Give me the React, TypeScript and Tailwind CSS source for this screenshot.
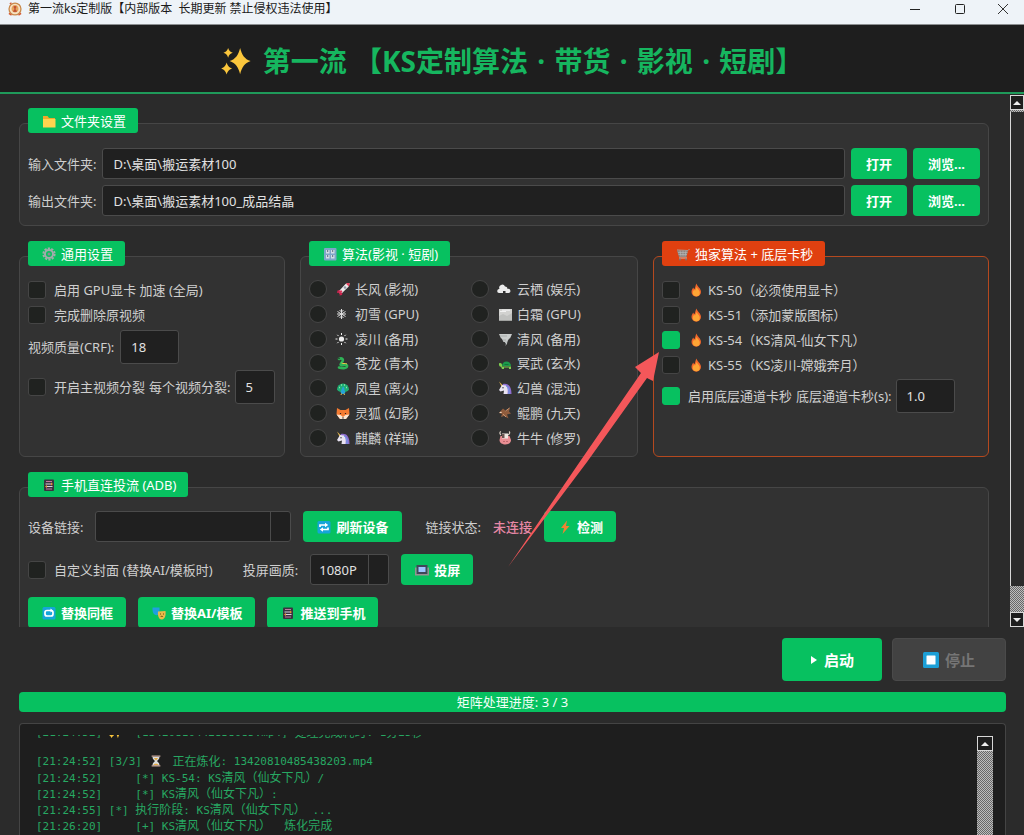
import { useState, type ReactNode } from "react"
import clsx from "clsx"

interface IconProps {
  className?: string
}

type IconName =
  | "folder" | "gear" | "knobs" | "cart" | "phone" | "rocket" | "snow" | "sun" | "snake" | "peacock"
  | "fox" | "unicorn" | "cloud" | "fog" | "tornado" | "turtle" | "eagle" | "ox" | "fire" | "refresh"
  | "repeat" | "masks" | "bolt" | "screen" | "stop" | "hourglass" | "sparkles"

// Small emoji drawings, all on a 16x16 grid
const drawings: Record<IconName, ReactNode> = {
  folder: (
    <>
      <path d="M2 3h4.5l1.5 2H14v9H2z" fill="#f0a92a" />
      <path d="M2 6h12.5v8.500H2z" fill="#ffd44f" />
    </>
  ),
  gear: (
    <>
      <circle cx="8" cy="8" r="5.600" fill="none" stroke="#a3abab" strokeWidth="2" strokeDasharray="2.200 1.300" />
      <circle cx="8" cy="8" r="4" fill="none" stroke="#a3abab" strokeWidth="2" />
      <circle cx="8" cy="8" r="1.500" fill="#8a9292" />
    </>
  ),
  knobs: (
    <>
      <rect x="2" y="2" width="12.500" height="12.500" rx="1" fill="#7fa6c9" />
      <path d="M4 4h3.500v3.500H4zM9 4h3.500v3.500H9zM4 9h3.500v3.500H4zM9 9h3.500v3.500H9z" fill="#d4dde6" />
      <path d="M5.700 4v2M10.700 4v2M5.700 9v2M10.700 9v2" stroke="#5b6c80" />
    </>
  ),
  cart: (
    <>
      <path d="M2 4l11 .5 1.500-1.500" fill="none" stroke="#b0a5a0" />
      <path d="M2 4.500h11L11.500 11H4z" fill="#8d8581" />
      <path d="M3 6.500h9.500M3.500 8.500H12M5 4.500l1 6M8 4.500v6M11 4.500l-1 6" stroke="#bbb" strokeWidth=".6" />
      <path d="M4 12h8" stroke="#c9beb9" />
      <circle cx="5" cy="13.500" r="1" fill="#777" />
      <circle cx="11" cy="13.500" r="1" fill="#777" />
    </>
  ),
  phone: (
    <>
      <rect x="3" y="2.500" width="10" height="11.500" rx="1" fill="#3b3340" />
      <path d="M5 4.500h6M5 12h6" stroke="#c07a9e" strokeWidth="1.200" />
      <path d="M4.500 7h5.500M6 9.500h5.500" stroke="#d8d2dc" strokeWidth="1.200" />
      <path d="M10 5.500l2 1.500-2 1.500zM6 8l-2 1.500L6 11z" fill="#e8953c" />
    </>
  ),
  rocket: (
    <>
      <path d="M5 9L2.500 9.500 2 12l3-.5zM7.500 11.500L7 14l-2.500.5.5-3z" fill="#c8234d" />
      <path d="M4.500 9.500L10.500 3C12 1.800 14 2 14.500 2c0 1 0 2.500-1.200 4L7 12z" fill="#ececec" />
      <path d="M11 2.700C12.500 1.900 14 2 14.500 2c0 1 0 2-.7 3.400z" fill="#e8415f" />
      <circle cx="10" cy="6.500" r="1.300" fill="#8f94a6" />
      <path d="M3.500 11.500L6 9l1.500 1.500L4.500 13z" fill="#d9345a" />
    </>
  ),
  snow: (
    <path d="M6.500 3v10M2.500 5.500l8 5M2.500 10.500l8-5M4.500 4l2 2 2-2M4.500 12l2-2 2 2M2 8h9" fill="none" stroke="#ddd" />
  ),
  sun: (
    <>
      <circle cx="6.500" cy="8" r="2.600" fill="#eee" />
      <path d="M6.500 2v2M6.500 12v2M.5 8h2M10.500 8h2M2.300 3.800l1.300 1.300M9.400 10.900l1.300 1.300M2.300 12.200l1.300-1.300M9.400 5.100l1.300-1.300" stroke="#eee" />
    </>
  ),
  snake: (
    <>
      <path d="M4 4c3-1.500 5 .5 3 3s-2 3.500.5 3 5-.5 4.500 1.500-5 2-8 1" fill="none" stroke="#2fb457" strokeWidth="2.600" strokeLinecap="round" />
      <path d="M6.500 8c1 1 4 0 5.500 1" fill="none" stroke="#f2cf4a" />
      <circle cx="4" cy="3.500" r=".7" fill="#222" />
    </>
  ),
  peacock: (
    <>
      <path d="M2 9.500A6 6 0 0 1 14 9.500c-1 2-3 2.500-6 2.500s-5-.5-6-2.500z" fill="#1fae74" />
      <path d="M4 7.500h1M6 5h1M9 5h1M11 7.500h1" stroke="#8be3a5" strokeWidth="1.500" />
      <path d="M8 6.500c2 1 1 3 2 5s-1 2.500-2 2.500-3-.5-2-3 1-3 2-4.500z" fill="#27a3d9" />
      <path d="M6.500 13.500L6 15M9 13.500l.5 1.500" stroke="#e7c04b" />
    </>
  ),
  fox: (
    <>
      <path d="M2 3l3.500 2h5L14 3l.5 6-3 4.500h-7L1.500 9z" fill="#f47b32" />
      <path d="M1.500 9.500l4 .5L8 12l2.500-2 4-.5-3.500 4.500H5z" fill="#fbe6d2" />
      <path d="M5.500 8v1M10.500 8v1" stroke="#2b211c" strokeWidth="1.200" />
      <path d="M7 12.500h2L8 14z" fill="#2b211c" />
    </>
  ),
  unicorn: (
    <>
      <path d="M2 1.500l4 4-1.500 1z" fill="#e6b84d" />
      <path d="M6 4c5-1 8.500 2 8.500 10H10L5.500 5z" fill="#8e6fd0" />
      <path d="M5 5l4 .5c2 2.500 2 5 1.500 8.500H6.500l.5-3.500-3.500 1L2 10z" fill="#e9e4f2" />
      <path d="M9 6c2.500 1 3.500 4 3 8" fill="none" stroke="#6aa7ec" />
      <circle cx="6" cy="7.800" r=".7" fill="#333" />
    </>
  ),
  cloud: <path d="M2 12a2 2 0 0 1 .5-4A3 3 0 0 1 8 5.500a2.500 2.500 0 0 1 2.500 2.500A2 2 0 0 1 12 12H8.500V10H6v2z" fill="#ececec" />,
  fog: (
    <>
      <rect x="2" y="3" width="13" height="11.500" fill="#d2d2d0" />
      <path d="M2 14.500V10l4-2 4 2 5-3v7.500z" fill="#c0c1bf" />
      <path d="M3 5.500h6M5 4.200h8" stroke="#f2f2f2" />
    </>
  ),
  tornado: (
    <>
      <path d="M2 3h13l-2 4.500H4zM4.500 7h8L10 11H6.500z" fill="#c9cccb" />
      <path d="M7 10h3.500l-.5 3L8 15l1-2z" fill="#c0c4c3" />
      <path d="M3 5h7M6 9h3" stroke="#9a9e9d" strokeWidth=".7" />
    </>
  ),
  turtle: (
    <>
      <path d="M5 11a4.500 4.500 0 0 1 9 0z" fill="#1c9a4b" />
      <path d="M4 11.500h10v2.500h-2V12.500H7V14H5z" fill="#7dcf4f" />
      <path d="M2 8.500c1.500-1 3 0 3 1.500v2c-2 0-3.500-1-3-3.500z" fill="#7dcf4f" />
      <path d="M7.500 9.500h4" stroke="#0f7637" />
    </>
  ),
  eagle: (
    <>
      <path d="M2 8l4-4.500 3 2.500 4-3.500-1 4 2 2-4 1 1.500 4L7 11l-3 1 1-3z" fill="#8f5c3d" />
      <path d="M8.500 6l4-3M6 9l3 3" stroke="#c4906d" />
      <path d="M2 8l2-1.500 1 1.500z" fill="#f0d9c2" />
    </>
  ),
  ox: (
    <>
      <path d="M4 5C2.500 4 2.500 2 4 1.500M11 5c2-1 2-3 1-3.500" fill="none" stroke="#dcd2c6" strokeWidth="1.200" />
      <path d="M3.500 6h9l1.500 4c0 3-2.500 4.500-5.500 4.500S2.500 13 2.500 10z" fill="#e98e93" />
      <path d="M5 3.500h6v5H5z" fill="#efe8e2" />
      <path d="M5 4h2.500v4H5z" fill="#6b5550" />
      <path d="M6.500 11.500h1M9.500 11.500h1" stroke="#913f47" />
    </>
  ),
  fire: (
    <>
      <path d="M8.500 1.500c.5 3 4.500 4.500 4.500 8.500a4.700 4.700 0 0 1-9.500 0c0-2 1-3.500 2-4.500 0 1 .5 1.500 1 1.500C7.500 5 7.500 3 8.500 1.500z" fill="#f1672b" />
      <path d="M8.500 5c.5 1.500 3.300 3 3.300 5.800a3.500 3.500 0 0 1-7 0c0-1.500.7-2.300 1.400-3.300.2.700.5 1 .9 1 .6-.8.800-2.200 1.400-3.500z" fill="#fda535" />
    </>
  ),
  refresh: (
    <>
      <rect x="1.500" y="2" width="13" height="12.500" rx="1.500" fill="#15a5d8" />
      <path d="M4 8V6h6M12 8.500v2H6" fill="none" stroke="#fff" strokeWidth="1.700" />
      <path d="M9 3.800L12.200 6 9 8.200zM7 8.300l-3.200 2.200L7 12.700z" fill="#fff" />
    </>
  ),
  repeat: (
    <>
      <rect x="1.500" y="2" width="13" height="12.500" rx="1.500" fill="#15a5d8" />
      <rect x="4" y="5.500" width="8" height="5.500" rx="2" fill="none" stroke="#fff" strokeWidth="1.700" />
      <path d="M9.500 3.500l2.500 2-2.500 2z" fill="#fff" />
    </>
  ),
  masks: (
    <>
      <path d="M1.500 2.500h7v5c0 2.500-3 3.500-5 2s-2-4-2-7z" fill="#1f9fe0" />
      <path d="M7 6.500l7.500-.5c.5 4.500-.5 8-3.500 8.500S6.500 11 7 6.500z" fill="#e9b949" />
      <path d="M9 9h1M12 9h1M9.500 12c.5-1 2-1 2.500 0" fill="none" stroke="#6d4e12" />
    </>
  ),
  bolt: <path d="M10 1.500L4 9h3l-1.500 6L12.500 7H9z" fill="#f08232" />,
  screen: (
    <>
      <rect x="2.500" y="3" width="11" height="9" fill="#3f4658" />
      <rect x="4.500" y="5" width="7" height="5" fill="#9cc6ff" />
      <path d="M1 5.500h1.500V12h11V5.500H15V13.500H1z" fill="#9a8f93" />
    </>
  ),
  stop: (
    <>
      <rect x="0" y="0" width="16" height="16" rx="1.500" fill="#1c9fd6" />
      <rect x="3.500" y="3.500" width="9" height="9" rx=".5" fill="#fff" />
    </>
  ),
  hourglass: (
    <>
      <path d="M4 3h8c0 3-2 4-3 5 1 1 3 2 3 5H4c0-3 2-4 3-5-1-1-3-2-3-5z" fill="#d9dcdc" />
      <path d="M5.500 4.500h5L8 7.500zM5 12.500c1-2 5-2 6 0z" fill="#e3a93f" />
      <path d="M3 2.500h10M3 13.500h10" stroke="#c9a89a" strokeWidth="1.300" />
    </>
  ),
  sparkles: (
    <path
      d="M10.200 1C11.200 4.800 12.500 6.800 15.800 8c-3.300 1.200-4.600 3.200-5.600 7C9.200 11.200 7.900 9.200 4.600 8c3.300-1.200 4.600-3.200 5.600-7zM3.800 1c.5 1.500 1 2 2.500 2.600-1.500.6-2 1.100-2.500 2.600-.5-1.500-1-2-2.500-2.600 1.500-.6 2-1.100 2.500-2.600zM3 8.800c.6 1.900 1.200 2.500 2.900 3.200-1.700.7-2.300 1.300-2.900 3.200-.6-1.900-1.200-2.500-2.900-3.200 1.700-.7 2.300-1.300 2.900-3.200z"
      fill="#fbc63c"
    />
  ),
}

const Icon = ({ name, className = "size-4" }: IconProps & { name: IconName }) => (
  <svg viewBox="0 0 16 16" className={clsx("shrink-0", className)} aria-hidden="true">
    {drawings[name]}
  </svg>
)

const fieldClass = "min-w-0 rounded-[3px] border border-[#4b4b4b] bg-[#202020] px-2.5 text-[#e2e2e2] outline-none"
const boxClass = "size-[18px] shrink-0 appearance-none border border-[#454545] bg-[#202220] checked:border-[#07c160] checked:bg-[#07c160]"

interface GroupProps {
  icon: IconName
  title: string
  accent?: boolean
  className?: string
  children: ReactNode
}

const Group = ({ icon, title, accent, className, children }: GroupProps) => (
  <section className={clsx("rounded-md border bg-[#323232] px-2", accent ? "border-[#b5491f]" : "border-[#464646]", className)}>
    <h2
      className={clsx(
        "-mt-4 flex h-[25px] w-fit items-center gap-1 rounded-[3px] pr-3 pl-[13px] text-white",
        accent ? "bg-[#e04010]" : "bg-[#07c160]"
      )}
    >
      <Icon name={icon} />
      {title}
    </h2>
    {children}
  </section>
)

interface ButtonProps {
  icon?: IconName
  children: ReactNode
}

const Button = ({ icon, children }: ButtonProps) => (
  <button
    type="button"
    className={clsx(
      "flex h-[31px] shrink-0 items-center gap-1 rounded bg-[#07c160] font-bold text-white",
      icon ? "px-[13px]" : "px-[15px]"
    )}
  >
    {icon && <Icon name={icon} />}
    {children}
  </button>
)

interface CheckProps {
  label: string
  icon?: IconName
  checked?: boolean
}

const Check = ({ label, icon, checked }: CheckProps) => (
  <label className="flex h-[25px] items-center gap-2 whitespace-nowrap">
    <input type="checkbox" defaultChecked={checked} className={clsx(boxClass, "rounded-[3px]")} />
    <span className="flex items-center gap-1">
      {icon && <Icon name={icon} />}
      {label}
    </span>
  </label>
)

const folders = [
  { id: "input-dir", label: "输入文件夹:", path: "D:\\桌面\\搬运素材100" },
  { id: "output-dir", label: "输出文件夹:", path: "D:\\桌面\\搬运素材100_成品结晶" },
]

const algorithms: { icon: IconName; label: string }[] = [
  { icon: "rocket", label: "长风 (影视)" },
  { icon: "cloud", label: "云栖 (娱乐)" },
  { icon: "snow", label: "初雪 (GPU)" },
  { icon: "fog", label: "白霜 (GPU)" },
  { icon: "sun", label: "凌川 (备用)" },
  { icon: "tornado", label: "清风 (备用)" },
  { icon: "snake", label: "苍龙 (青木)" },
  { icon: "turtle", label: "冥武 (玄水)" },
  { icon: "peacock", label: "凤皇 (离火)" },
  { icon: "unicorn", label: "幻兽 (混沌)" },
  { icon: "fox", label: "灵狐 (幻影)" },
  { icon: "eagle", label: "鲲鹏 (九天)" },
  { icon: "unicorn", label: "麒麟 (祥瑞)" },
  { icon: "ox", label: "牛牛 (修罗)" },
]

const exclusive = [
  { label: "KS-50（必须使用显卡）", checked: false },
  { label: "KS-51（添加蒙版图标）", checked: false },
  { label: "KS-54（KS清风-仙女下凡）", checked: true },
  { label: "KS-55（KS凌川-嫦娥奔月）", checked: false },
]

const logLines = [
  "[21:24:52]     [*] KS-54: KS清风（仙女下凡）/",
  "[21:24:52]     [*] KS清风（仙女下凡）:",
  "[21:24:55] [*] 执行阶段: KS清风（仙女下凡） ...",
  "[21:26:20]     [+] KS清风（仙女下凡）  炼化完成",
]

// Chinese runs are set one size up from the monospace text
const LogText = ({ text }: { text: string }) => (
  <>
    {text.split(/([\u4e00-\u9fff（）]+)/).map((part, i) =>
      i % 2 ? <span key={i} className="text-xs leading-4">{part}</span> : part
    )}
  </>
)

const ditherClass = "bg-[conic-gradient(#bdbdbd_25%,#686868_0_50%,#bdbdbd_0_75%,#686868_0)] bg-[length:2px_2px]"

const ArrowButton = ({ down }: { down?: boolean }) => (
  <button
    type="button"
    aria-label={down ? "向下滚动" : "向上滚动"}
    className="flex h-[15px] shrink-0 items-center justify-center border border-[#d8d8d8] bg-[#1e1e1e]"
  >
    <svg viewBox="0 0 8 4" className={clsx("h-1 w-2", down && "rotate-180")}>
      <path d="M4 0l4 4H0z" fill="#eee" />
    </svg>
  </button>
)

const Dot = () => <span className="px-0.5"> · </span>

const App = () => {
  const [folderPaths, setFolderPaths] = useState(folders.map((f) => f.path))
  const [algorithm, setAlgorithm] = useState("")

  const handlePathChange = (index: number, value: string) => {
    setFolderPaths((paths) => paths.map((p, i) => (i === index ? value : p)))
  }

  return (
    <div className="relative flex h-screen flex-col overflow-hidden bg-[#2b2b2b] font-['Noto_Sans','Noto_Sans_CJK_SC',sans-serif] text-[13px] leading-5 text-[#cfcfcf]">
      {/* Title bar */}
      <div className="flex h-[25px] shrink-0 items-center border-b border-[#8c8f91] bg-[#eef3f8] pb-1.5 pl-2 text-xs text-[#1a1a1a]">
        <svg viewBox="0 0 16 16" className="mr-1.5 size-3.5" aria-hidden="true">
          <circle cx="8" cy="8" r="6.800" fill="#f6e2c4" stroke="#c98a4b" strokeWidth="1.500" />
          <path d="M8 3.500c-2.500 0-4 2-4 4.500s2 4 4 4 4-1.500 4-4-1.500-4.500-4-4.500z" fill="#e7a25a" />
          <path d="M6.500 5.500h3M8 5.500v5M6 10.500h4" stroke="#b5402c" strokeWidth="1.400" />
          <path d="M1 13l3 2M15 13l-3 2M2 2l2-1" stroke="#d4572f" strokeWidth="1.500" />
        </svg>
        <span className="grow whitespace-pre">第一流ks定制版【内部版本  长期更新 禁止侵权违法使用】</span>
        <button type="button" aria-label="最小化" className="flex w-[45px] justify-center">
          <svg viewBox="0 0 12 12" className="size-3"><path d="M1 6.500h10" stroke="#222" /></svg>
        </button>
        <button type="button" aria-label="最大化" className="flex w-[45px] justify-center">
          <svg viewBox="0 0 12 12" className="size-3">
            <rect x="1.500" y="1.500" width="9" height="9" rx="1" fill="none" stroke="#222" />
          </svg>
        </button>
        <button type="button" aria-label="关闭" className="flex w-[42px] justify-center">
          <svg viewBox="0 0 12 12" className="size-3"><path d="M1 1l10 10M11 1L1 11" stroke="#333" /></svg>
        </button>
      </div>

      <header className="flex h-[69px] shrink-0 items-center justify-center gap-3 border-b-2 border-[#1f9a5a] bg-[#1e1e1e] pt-1">
        <Icon name="sparkles" className="size-[30px]" />
        <h1 className="text-[28px] leading-9 font-bold whitespace-pre text-[#16b65f]">
          第一流 【KS定制算法<Dot />带货<Dot />影视<Dot />短剧】
        </h1>
      </header>

      <div className="flex min-h-0 flex-1">
        <main className="min-w-0 flex-1 overflow-y-auto pt-[29px] pr-[21px] pl-[19px] [scrollbar-width:none]">
          {/* Folders */}
          <Group icon="folder" title="文件夹设置" className="pb-[9px]">
            <div className="mt-[15px] space-y-1.5">
              {folders.map((folder, i) => (
                <div key={folder.id} className="flex items-center gap-1.5">
                  <label htmlFor={folder.id}>{folder.label}</label>
                  <input
                    id={folder.id}
                    type="text"
                    value={folderPaths[i]}
                    onChange={(e) => handlePathChange(i, e.target.value)}
                    className={clsx(fieldClass, "h-[31px] grow")}
                  />
                  <Button>打开</Button>
                  <Button>浏览...</Button>
                </div>
              ))}
            </div>
          </Group>

          <div className="mt-[30px] grid grid-cols-[266fr_338fr_336fr] gap-[15px]">
            {/* General settings */}
            <Group icon="gear" title="通用设置">
              <div className="mt-[11px]">
                <Check label="启用 GPU显卡 加速 (全局)" />
                <Check label="完成删除原视频" />
                <div className="mt-[3px] flex items-center gap-1.5">
                  <label htmlFor="crf">视频质量(CRF):</label>
                  <input id="crf" type="text" defaultValue="18" className={clsx(fieldClass, "h-[34px] w-[59px]")} />
                </div>
                <div className="mt-1.5 flex items-center gap-1 whitespace-nowrap">
                  <Check label="开启主视频分裂" />
                  <label htmlFor="split">每个视频分裂:</label>
                  <input id="split" type="text" defaultValue="5" className={clsx(fieldClass, "h-[34px] w-10")} />
                </div>
              </div>
            </Group>

            {/* Algorithms */}
            <Group icon="knobs" title="算法(影视 · 短剧)">
              <div className="mt-[11px] mb-1.5 grid h-[173px] auto-rows-fr grid-cols-[162px_1fr]">
                {algorithms.map((item) => (
                  <label key={item.label} className="flex items-center gap-2 whitespace-nowrap">
                    <input
                      type="radio"
                      name="algorithm"
                      value={item.label}
                      checked={algorithm === item.label}
                      onChange={(e) => setAlgorithm(e.target.value)}
                      className={clsx(boxClass, "rounded-full")}
                    />
                    <span className="flex items-center gap-1">
                      <Icon name={item.icon} />
                      {item.label}
                    </span>
                  </label>
                ))}
              </div>
            </Group>

            {/* Exclusive algorithms */}
            <Group icon="cart" title="独家算法 + 底层卡秒" accent>
              <div className="mt-[11px]">
                {exclusive.map((item) => (
                  <Check key={item.label} icon="fire" label={item.label} checked={item.checked} />
                ))}
                <div className="mt-0.5 flex items-center gap-1 whitespace-nowrap">
                  <Check label="启用底层通道卡秒" checked />
                  <label htmlFor="seconds">底层通道卡秒(s):</label>
                  <input id="seconds" type="text" defaultValue="1.0" className={clsx(fieldClass, "h-[34px] w-[59px]")} />
                </div>
              </div>
            </Group>
          </div>

          {/* Phone streaming */}
          <Group icon="phone" title="手机直连投流 (ADB)" className="mt-[30px]">
            <div className="mt-3.5 space-y-3">
              <div className="flex items-center gap-3">
                <label htmlFor="device">设备链接:</label>
                <div className="flex h-[31px] w-[196px] rounded-[3px] border border-[#4b4b4b] bg-[#202020]">
                  <select id="device" className="min-w-0 grow appearance-none px-2 outline-none" />
                  <span className="w-5 border-l border-[#4b4b4b]" />
                </div>
                <Button icon="refresh">刷新设备</Button>
                <span className="ml-3">链接状态:</span>
                <span className="font-medium text-[#e687a5]">未连接</span>
                <Button icon="bolt">检测</Button>
              </div>
              <div className="flex items-center gap-3">
                <Check label="自定义封面 (替换AI/模板时)" />
                <label htmlFor="quality" className="ml-[18px]">投屏画质:</label>
                <div className="flex h-[31px] w-[79px] rounded-[3px] border border-[#4b4b4b] bg-[#202020]">
                  <select id="quality" className="min-w-0 grow appearance-none px-2 text-[#e2e2e2] outline-none">
                    <option>1080P</option>
                  </select>
                  <span className="w-5 border-l border-[#4b4b4b]" />
                </div>
                <Button icon="screen">投屏</Button>
              </div>
              <div className="flex items-center gap-3 pb-4">
                <Button icon="repeat">替换同框</Button>
                <Button icon="masks">替换AI/模板</Button>
                <Button icon="phone">推送到手机</Button>
              </div>
            </div>
          </Group>
        </main>

        {/* Settings scrollbar */}
        <div className="flex w-3.5 shrink-0 flex-col pt-px">
          <ArrowButton />
          <div className={clsx("h-0.5", ditherClass)} />
          <div className="grow border-l border-[#d8d8d8]" />
          <div className={clsx("h-[26px]", ditherClass)} />
          <ArrowButton down />
        </div>
      </div>

      <footer className="shrink-0 pt-[11px] pr-[18px] pl-[19px]">
        <div className="flex justify-end gap-2.5 text-[15px] font-bold">
          <button type="button" className="flex h-[43px] items-center gap-1.5 rounded bg-[#07c160] px-7 text-white">
            <svg viewBox="0 0 8 8" className="size-2"><path d="M1 0l6 4-6 4z" fill="#fff" /></svg>
            启动
          </button>
          <button type="button" disabled className="flex h-[43px] items-center gap-1.5 rounded border border-[#4a4a4a] bg-[#424242] px-[30px] text-[#757575]">
            <Icon name="stop" />
            停止
          </button>
        </div>

        <div
          role="progressbar"
          aria-valuenow={3}
          aria-valuemax={3}
          className="mt-[11px] flex h-5 items-center justify-center rounded bg-[#07c160] text-[#f2fff7]"
        >
          矩阵处理进度: 3 / 3
        </div>

        {/* Log */}
        <div className="mt-[11px] flex h-28 rounded-t border border-b-0 border-[#444] bg-[#1e1e1e] pt-[11px] pr-3 pl-4">
          <div className="grow overflow-hidden font-['DejaVu_Sans_Mono','Noto_Sans_CJK_SC',monospace] text-[11px] leading-4 whitespace-pre text-[#27a862]">
            <div className="-mt-2.5 flex h-4">
              <LogText text="[21:24:52] " />
              <Icon name="sparkles" className="mr-1.5 size-3.5" />
              <LogText text=" [13420810442838085.mp4] 处理完成耗时: 1分25秒" />
            </div>
            <div className="mt-[13px] flex h-4">
              <LogText text="[21:24:52] [3/3] " />
              <Icon name="hourglass" className="mr-2.5 size-3.5" />
              <LogText text="正在炼化: 13420810485438203.mp4" />
            </div>
            {logLines.map((line, i) => (
              <div key={i} className="h-4">
                <LogText text={line} />
              </div>
            ))}
          </div>
          <div className="flex w-4 shrink-0 flex-col pt-px">
            <ArrowButton />
            <div className={clsx("grow", ditherClass)} />
          </div>
        </div>
      </footer>

      {/* Pointer towards the ticked KS-54 option */}
      <svg viewBox="0 0 152 216" className="pointer-events-none absolute top-[352px] left-[508px] h-[216px] w-[152px]" aria-hidden="true">
        <path d="M0 215L73 108L133 21L127 15L151 0L145 29L139 26L79 110Z" fill="#f4575a" />
      </svg>
    </div>
  )
}

export default App
